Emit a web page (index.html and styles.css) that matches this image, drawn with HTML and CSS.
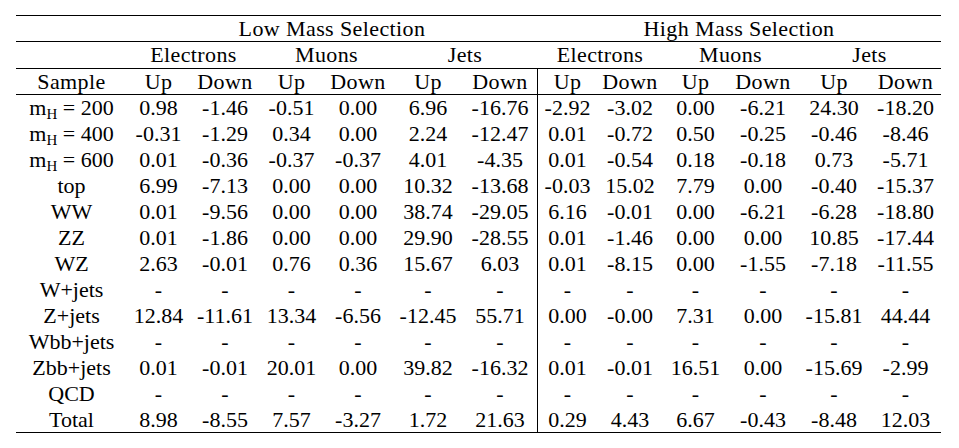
FILE: index.html
```html
<!DOCTYPE html>
<html lang="en">
<head>
<meta charset="utf-8">
<title>Systematics table</title>
<link rel="stylesheet" href="styles.css">
</head>
<body>
<div class="page">
<table class="syst">
<colgroup>
<col class="w111"><col class="w63"><col class="w70"><col class="w63"><col class="w70"><col class="w70"><col class="w74">
<col class="w60"><col class="w66"><col class="w65"><col class="w70"><col class="w72"><col class="w71">
</colgroup>
<thead>
<tr class="r-top"><th></th><th colspan="6">Low Mass Selection</th><th colspan="6">High Mass Selection</th></tr>
<tr class="r-mid"><th></th><th colspan="2">Electrons</th><th colspan="2">Muons</th><th colspan="2">Jets</th><th colspan="2">Electrons</th><th colspan="2">Muons</th><th colspan="2">Jets</th></tr>
<tr class="r-head"><th>Sample</th><th>Up</th><th>Down</th><th>Up</th><th>Down</th><th>Up</th><th>Down</th><th class="vl">Up</th><th>Down</th><th>Up</th><th>Down</th><th>Up</th><th>Down</th></tr>
</thead>
<tbody>
<tr><td>m<sub class="sub">H</sub> = 200</td><td>0.98</td><td>-1.46</td><td>-0.51</td><td>0.00</td><td>6.96</td><td>-16.76</td><td class="vl">-2.92</td><td>-3.02</td><td>0.00</td><td>-6.21</td><td>24.30</td><td>-18.20</td></tr>
<tr><td>m<sub class="sub">H</sub> = 400</td><td>-0.31</td><td>-1.29</td><td>0.34</td><td>0.00</td><td>2.24</td><td>-12.47</td><td class="vl">0.01</td><td>-0.72</td><td>0.50</td><td>-0.25</td><td>-0.46</td><td>-8.46</td></tr>
<tr><td>m<sub class="sub">H</sub> = 600</td><td>0.01</td><td>-0.36</td><td>-0.37</td><td>-0.37</td><td>4.01</td><td>-4.35</td><td class="vl">0.01</td><td>-0.54</td><td>0.18</td><td>-0.18</td><td>0.73</td><td>-5.71</td></tr>
<tr><td>top</td><td>6.99</td><td>-7.13</td><td>0.00</td><td>0.00</td><td>10.32</td><td>-13.68</td><td class="vl">-0.03</td><td>15.02</td><td>7.79</td><td>0.00</td><td>-0.40</td><td>-15.37</td></tr>
<tr><td>WW</td><td>0.01</td><td>-9.56</td><td>0.00</td><td>0.00</td><td>38.74</td><td>-29.05</td><td class="vl">6.16</td><td>-0.01</td><td>0.00</td><td>-6.21</td><td>-6.28</td><td>-18.80</td></tr>
<tr><td>ZZ</td><td>0.01</td><td>-1.86</td><td>0.00</td><td>0.00</td><td>29.90</td><td>-28.55</td><td class="vl">0.01</td><td>-1.46</td><td>0.00</td><td>0.00</td><td>10.85</td><td>-17.44</td></tr>
<tr><td>WZ</td><td>2.63</td><td>-0.01</td><td>0.76</td><td>0.36</td><td>15.67</td><td>6.03</td><td class="vl">0.01</td><td>-8.15</td><td>0.00</td><td>-1.55</td><td>-7.18</td><td>-11.55</td></tr>
<tr><td>W+jets</td><td>-</td><td>-</td><td>-</td><td>-</td><td>-</td><td>-</td><td class="vl">-</td><td>-</td><td>-</td><td>-</td><td>-</td><td>-</td></tr>
<tr><td>Z+jets</td><td>12.84</td><td>-11.61</td><td>13.34</td><td>-6.56</td><td>-12.45</td><td>55.71</td><td class="vl">0.00</td><td>-0.00</td><td>7.31</td><td>0.00</td><td>-15.81</td><td>44.44</td></tr>
<tr><td>Wbb+jets</td><td>-</td><td>-</td><td>-</td><td>-</td><td>-</td><td>-</td><td class="vl">-</td><td>-</td><td>-</td><td>-</td><td>-</td><td>-</td></tr>
<tr><td>Zbb+jets</td><td>0.01</td><td>-0.01</td><td>20.01</td><td>0.00</td><td>39.82</td><td>-16.32</td><td class="vl">0.01</td><td>-0.01</td><td>16.51</td><td>0.00</td><td>-15.69</td><td>-2.99</td></tr>
<tr><td>QCD</td><td>-</td><td>-</td><td>-</td><td>-</td><td>-</td><td>-</td><td class="vl">-</td><td>-</td><td>-</td><td>-</td><td>-</td><td>-</td></tr>
<tr class="r-last"><td>Total</td><td>8.98</td><td>-8.55</td><td>7.57</td><td>-3.27</td><td>1.72</td><td>21.63</td><td class="vl">0.29</td><td>4.43</td><td>6.67</td><td>-0.43</td><td>-8.48</td><td>12.03</td></tr>
</tbody>
</table>
</div>
</body>
</html>
```
FILE: styles.css
```css
html {
  font-family: "Liberation Serif", "DejaVu Serif", serif;
}

html, body {
  margin: 0;
  padding: 0;
  background: #ffffff;
}

body {
  font-family: "Liberation Serif", "DejaVu Serif", serif;
  font-size: 22px;
}

.page {
  padding: 15px 0 0 16px;
}

.syst {
  border-collapse: separate;
  border-spacing: 0;
  table-layout: fixed;
  width: 925px;
  font-family: "Liberation Serif", "DejaVu Serif", serif;
  font-size: 22px;
  color: #000000;
  border-top: 1px solid #000000;
}

.w111 { width: 111px; }
.w63 { width: 63px; }
.w70 { width: 70px; }
.w74 { width: 74px; }
.w60 { width: 60px; }
.w66 { width: 66px; }
.w65 { width: 65px; }
.w72 { width: 72px; }
.w71 { width: 71px; }

.syst th,
.syst td {
  padding: 0;
  text-align: center;
  font-weight: normal;
  font-family: "Liberation Serif", "DejaVu Serif", serif;
  white-space: nowrap;
  line-height: 24px;
  vertical-align: middle;
}

.syst th {
  letter-spacing: 0.4px;
}

.r-top { height: 26px; }
.r-mid { height: 27px; }
.r-head { height: 26px; }
.syst tbody tr { height: 26px; }

.r-top th,
.r-mid th,
.r-head th,
.r-last td {
  border-bottom: 1px solid #000000;
}

.syst .vl {
  border-left: 1px solid #000000;
}

.sub {
  font-size: 15px;
  line-height: 0;
  vertical-align: -4px;
}
```
